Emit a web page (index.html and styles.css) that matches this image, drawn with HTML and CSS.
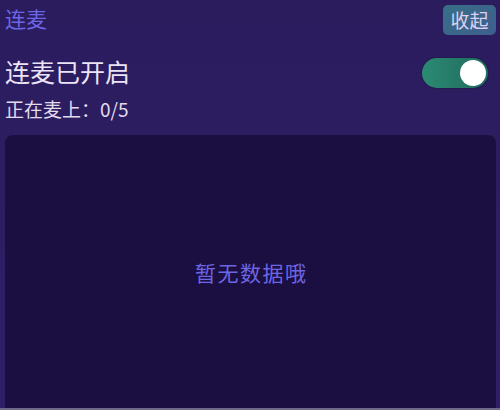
FILE: index.html
```html
<!DOCTYPE html>
<html lang="zh-CN">
<head>
<meta charset="utf-8">
<link rel="stylesheet" href="styles.css">
</head>
<body>
<div class="panel">
  <div class="header">
    <span class="tab-title">连麦</span>
    <button class="collapse-btn">收起</button>
  </div>
  <div class="status-row">
    <span class="status-title">连麦已开启</span>
    <div class="switch"><div class="knob"></div></div>
  </div>
  <div class="count">正在麦上：0/5</div>
  <div class="list-box">
    <span class="empty">暂无数据哦</span>
  </div>
  <div class="bottom-line"></div>
</div>
</body>
</html>
```
FILE: styles.css
```css
html, body {
  margin: 0;
  padding: 0;
}
body {
  width: 500px;
  height: 410px;
  overflow: hidden;
  background: linear-gradient(180deg, #2b1c5e 0%, #2f1f68 100%);
  font-family: "Microsoft YaHei", "Noto Sans CJK SC", "Noto Sans", sans-serif;
}
.panel {
  display: flex;
  flex-direction: column;
  height: 410px;
}
.header {
  display: flex;
  justify-content: space-between;
  align-items: flex-start;
  padding: 5px 4px 0 5px;
  height: 33px;
}
.tab-title {
  color: #6b66e6;
  font-size: 21px;
  line-height: 26px;
}
.collapse-btn {
  width: 53px;
  height: 30px;
  border: none;
  border-radius: 5px;
  background: linear-gradient(135deg, #376f86 0%, #3f5e8e 100%);
  color: #ddd0f2;
  font-family: inherit;
  font-size: 19px;
  padding: 0;
  line-height: 30px;
}
.status-row {
  display: flex;
  justify-content: space-between;
  align-items: center;
  padding: 0 12px 0 5px;
  height: 30px;
  margin-top: 20px;
}
.status-title {
  color: #ece4f6;
  font-size: 25px;
  line-height: 30px;
  margin-bottom: 5px;
}
.switch {
  position: relative;
  width: 66px;
  height: 30px;
  border-radius: 15px;
  background: linear-gradient(90deg, #2b8a72 0%, #1f6a5c 100%);
  box-shadow: 0 0 2px rgba(0,0,0,0.5);
}
.knob {
  position: absolute;
  right: 2px;
  top: 2px;
  width: 26px;
  height: 26px;
  border-radius: 50%;
  background: #ffffff;
}
.count {
  color: #e2dcec;
  font-size: 19px;
  padding-left: 5px;
  margin-top: 9px;
  line-height: 24px;
}
.list-box {
  flex: 1;
  margin: 14px 4px 0 5px;
  background: #1b0f42;
  border-radius: 8px 8px 0 0;
  display: flex;
  align-items: center;
  justify-content: center;
}
.empty {
  color: #6d66e2;
  font-size: 21px;
  letter-spacing: 1.5px;
  margin-right: -1.5px;
}
.bottom-line {
  height: 2px;
  background: #6f6a88;
}
```
